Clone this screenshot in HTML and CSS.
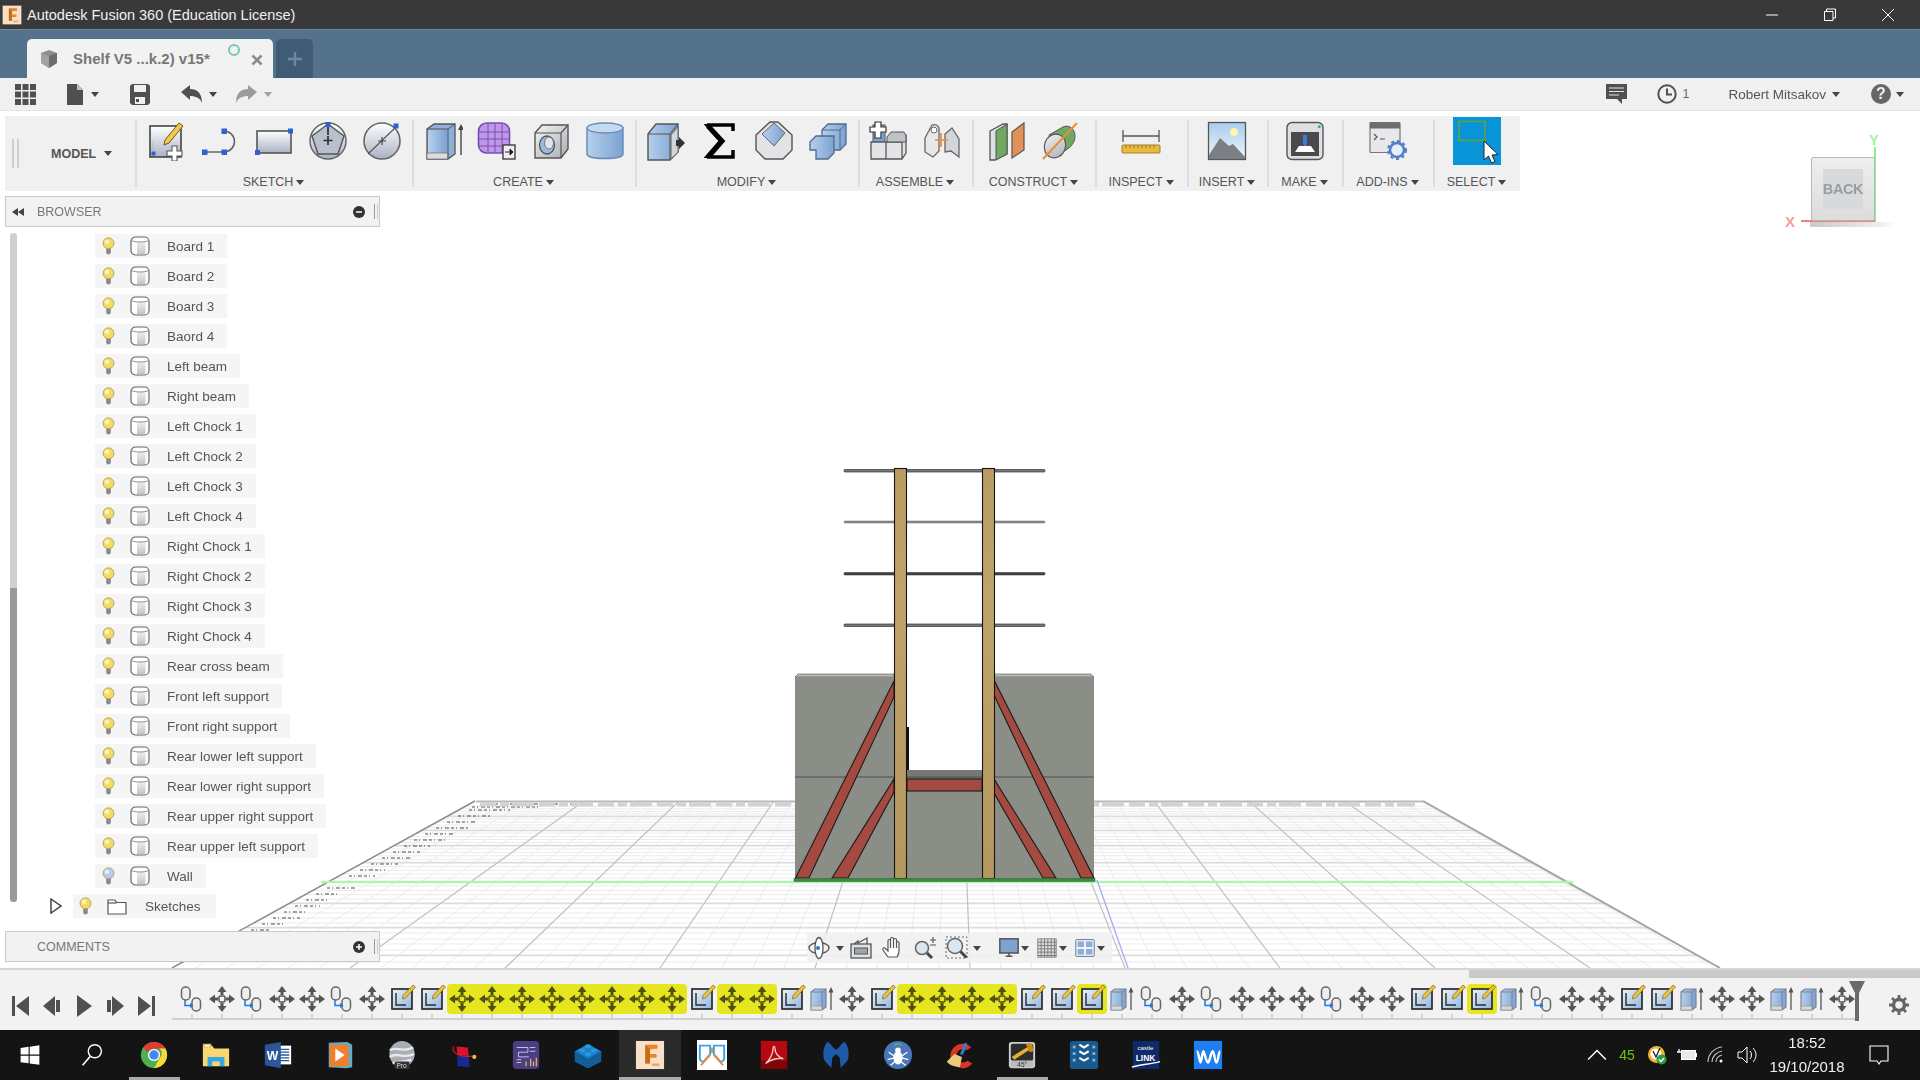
FILE: index.html
```html
<!DOCTYPE html>
<html lang="en">
<head>
<meta charset="utf-8">
<title>Autodesk Fusion 360 (Education License)</title>
<link rel="stylesheet" href="styles.css">
</head>
<body>
<svg class="defs" aria-hidden="true">
<defs>
<linearGradient id="gPaper" x1="0" y1="0" x2="0" y2="1"><stop offset="0" stop-color="#fff"/><stop offset="1" stop-color="#aab2c4"/></linearGradient>
<linearGradient id="gBlue" x1="0" y1="0" x2="1" y2="0"><stop offset="0" stop-color="#b7d0ec"/><stop offset="1" stop-color="#7ba2d2"/></linearGradient>
<linearGradient id="gGrey" x1="0" y1="0" x2="1" y2="1"><stop offset="0" stop-color="#f4f4f4"/><stop offset="1" stop-color="#a9adb5"/></linearGradient>
<linearGradient id="gCyl" x1="0" y1="0" x2="0" y2="1"><stop offset="0" stop-color="#eef0f2"/><stop offset="1" stop-color="#c2c6cc"/></linearGradient>
<linearGradient id="gSketch" x1="0" y1="0" x2="1" y2="1"><stop offset="0" stop-color="#eef3fa"/><stop offset="1" stop-color="#8fb5de"/></linearGradient>
<linearGradient id="gBeam" x1="0" y1="0" x2="0" y2="1"><stop offset="0" stop-color="#b89c62"/><stop offset=".3" stop-color="#bfa36a"/><stop offset="1" stop-color="#b4985f"/></linearGradient>
<linearGradient id="gSky" x1="0" y1="0" x2="0" y2="1"><stop offset="0" stop-color="#a6cdee"/><stop offset="1" stop-color="#f3f6f8"/></linearGradient>

<symbol id="bulb" viewBox="0 0 14 19"><circle cx="7" cy="6.6" r="5.9" fill="currentColor" stroke="#a89a58" stroke-width=".9"/><circle cx="5.4" cy="5" r="2.6" fill="#fff" opacity=".6"/><path d="M4.5 12.5h5v4.2l-1 1.6h-3l-1-1.6z" fill="#8a8a8a"/></symbol>
<symbol id="cyl" viewBox="0 0 20 20"><rect x="1" y="1" width="18" height="18" rx="4.5" fill="#fff" stroke="#666" stroke-width="1.2"/><path d="M7 5.500h8.500v11.500a2 2 0 0 1-1 1H7z" fill="url(#gCyl)"/><path d="M1.400 4.500c3 2 14 2 17.200 0" fill="none" stroke="#888" stroke-width=".9"/></symbol>
<symbol id="folder" viewBox="0 0 20 18"><path d="M1 3h7l1.500 2.500H19V17H1z" fill="#fff" stroke="#555" stroke-width="1.200"/><path d="M1 6h8.500" stroke="#555" stroke-width="1.200"/></symbol>

<symbol id="t-sketch" viewBox="0 0 40 40"><rect x="4" y="5" width="31" height="31" fill="url(#gPaper)" stroke="#444" stroke-width="1.6"/><path d="M33 2l4 3-14 17-5 2 1-5z" fill="#f2c94c" stroke="#6b5a1c" stroke-width="1"/><path d="M7 32h11M7 32V20" stroke="#b3b9c6" stroke-width="1"/><rect x="5.500" y="30.500" width="4" height="4" fill="#2f62cf"/><path d="M26 25h5v5h5v5h-5v5h-5v-5h-5v-5h5z" fill="#fff" stroke="#555" stroke-width="1.100"/></symbol>
<symbol id="t-line" viewBox="0 0 40 40"><path d="M5 31H24M24 10A10.500 10.500 0 0 1 24 31" fill="none" stroke="#666" stroke-width="1.600"/><g fill="#2f62cf"><rect x="2" y="28.500" width="5.500" height="5.500"/><rect x="21.500" y="28.500" width="5.500" height="5.500"/><rect x="21.500" y="7.500" width="5.500" height="5.500"/></g></symbol>
<symbol id="t-rect" viewBox="0 0 40 40"><rect x="3" y="10" width="34" height="22" fill="url(#gPaper)" stroke="#555" stroke-width="1.600"/><rect x="1" y="29" width="5" height="5" fill="#2f62cf"/><rect x="34" y="7.500" width="5" height="5" fill="#2f62cf"/></symbol>
<symbol id="t-poly" viewBox="0 0 40 40"><circle cx="20" cy="20" r="18" fill="url(#gPaper)" stroke="#666" stroke-width="1.500"/><path d="M20 3l16 12-6 18H10L4 15z" fill="#b9bfcc" stroke="#555" stroke-width="1.400"/><path d="M20 5v9M20 15v9M15.500 19.500h9" stroke="#333" stroke-width="1.700"/><rect x="17.500" y="1" width="5" height="5" fill="#2f62cf"/></symbol>
<symbol id="t-circ" viewBox="0 0 40 40"><circle cx="20" cy="20" r="18" fill="url(#gPaper)" stroke="#666" stroke-width="1.600"/><path d="M6 33L34 6" stroke="#555" stroke-width="1.100"/><path d="M20 16v8M16 20h8" stroke="#444" stroke-width="1.200"/><rect x="31.500" y="2.500" width="5" height="5" fill="#2f62cf"/></symbol>
<symbol id="t-ext" viewBox="0 0 40 40"><path d="M4 8l7-5h21v30l-7 5H4z" fill="#8fb0d8" stroke="#555" stroke-width="1.300"/><path d="M5 9h19v23H5z" fill="url(#gBlue)"/><path d="M4 32h21v6H4z" fill="#dcdcdc" stroke="#777" stroke-width=".8"/><path d="M4 8h21l7-5M25 8v30" fill="none" stroke="#555" stroke-width="1"/><path d="M38 34V8" stroke="#444" stroke-width="1.400"/><path d="M38 3l-3 6h6z" fill="#444"/></symbol>
<symbol id="t-form" viewBox="0 0 40 40"><rect x="1.500" y="2" width="31" height="30" rx="8" fill="#bd98e8" stroke="#7a4fb5" stroke-width="1.600"/><path d="M11 2.500v29M18 2v30M25 2.500v29M2 11h30M2 18h30M2 25h30" stroke="#7a4fb5" stroke-width="1"/><rect x="26" y="24" width="12" height="14" fill="#eee" stroke="#333" stroke-width="1.300"/><path d="M28 31h5M33 28l3 3-3 3z" stroke="#222" fill="#222"/></symbol>
<symbol id="t-hole" viewBox="0 0 40 40"><path d="M4 12l7-8h26v24l-7 9H4z" fill="url(#gGrey)" stroke="#555" stroke-width="1.400"/><path d="M4 12h26v25M30 12l7-8" fill="none" stroke="#555" stroke-width="1.200"/><ellipse cx="16" cy="24" rx="7.500" ry="9" fill="#9db9dc" stroke="#555" stroke-width="1.300"/><ellipse cx="18" cy="22" rx="4.500" ry="6" fill="#dfe5ee" stroke="#777"/></symbol>
<symbol id="t-cylinder" viewBox="0 0 40 40"><path d="M2 7v26c0 6 36 6 36 0V7z" fill="url(#gBlue)" stroke="#6a8db8" stroke-width="1.500"/><ellipse cx="20" cy="7" rx="18" ry="5" fill="#c4daee" stroke="#6a8db8" stroke-width="1.300"/></symbol>
<symbol id="t-press" viewBox="0 0 40 40"><path d="M2 13L10 3h22v28l-8 8H2z" fill="url(#gBlue)" stroke="#555" stroke-width="1.400"/><path d="M2 13h22v26M24 13l8-10" fill="none" stroke="#555" stroke-width="1.100"/><path d="M25 14l7-8v25l-7 7z" fill="#d2d5da" stroke="#666"/><path d="M30 19h3v-3l6 6-6 6v-3h-3z" fill="#333"/></symbol>
<symbol id="t-sigma" viewBox="0 0 40 40"><path d="M31 4H6l14 16L6 36h25" fill="none" stroke="#000" stroke-width="2.200"/><path d="M8 5l14 15L9 35" fill="none" stroke="#000" stroke-width="5"/><path d="M7 36h26v-7M7 4h26v6" fill="none" stroke="#000" stroke-width="3.500"/></symbol>
<symbol id="t-chamf" viewBox="0 0 40 40"><path d="M2 14L16 1h8l14 13v15l-9 9H11l-9-9z" fill="#e2e3e6" stroke="#555" stroke-width="1.400"/><path d="M20 2l11 10-11 13L8 13z" fill="url(#gBlue)" stroke="#666" stroke-width="1"/></symbol>
<symbol id="t-comb" viewBox="0 0 40 40"><path d="M14 9l6-6h18v20l-6 6H14z" fill="url(#gBlue)" stroke="#4f6a8e" stroke-width="1.300"/><path d="M2 21l6-6h18v17l-6 6H8v-9H2z" fill="url(#gBlue)" stroke="#4f6a8e" stroke-width="1.300"/><path d="M14 9h18v20M32 9l6-6" fill="none" stroke="#4f6a8e" stroke-width="1"/></symbol>
<symbol id="t-asm" viewBox="0 0 40 40"><rect x="5" y="4" width="12" height="18" fill="#7da3d6" stroke="#555"/><path d="M3 21h31v17H3zM34 21l4-6v17l-4 6" fill="#e3e4e7" stroke="#555" stroke-width="1.300"/><path d="M18 21v17" stroke="#555" stroke-width="1.300"/><path d="M19 16l4-5h13l2 4v6H19z" fill="#bfc2c8" stroke="#555"/><path d="M7 1h6v5h5v5h-5v6H7v-6H2V6h5z" fill="#fff" stroke="#333" stroke-width="1.200"/></symbol>
<symbol id="t-joint" viewBox="0 0 40 40"><path d="M3 17L10 4c3-1 6 0 7 3v23l-6 6-8-5z" fill="#e8e8e8" stroke="#666" stroke-width="1.300"/><path d="M23 13l7-6 7 11v18l-8-6-6 1z" fill="#d3d5da" stroke="#666" stroke-width="1.300"/><path d="M13 19h13" stroke="#e98e3c" stroke-width="1.600"/><circle cx="12" cy="9" r="3" fill="#fff" stroke="#666"/><path d="M19 12v14" stroke="#e98e3c" stroke-width="1.800"/></symbol>
<symbol id="t-plane" viewBox="0 0 40 40"><path d="M3 10l13-7h4v30l-12 6H3z" fill="#dfe0e2" stroke="#555" stroke-width="1.300"/><path d="M9 10l11-7v30L9 39z" fill="#6ea861" stroke="#555"/><path d="M25 37V11l12-9v27z" fill="#e39156" stroke="#555" stroke-width="1.200"/></symbol>
<symbol id="t-axis" viewBox="0 0 40 40"><path d="M8 14l14-8c6-3 12 2 12 9 0 5-2 8-6 12l-12 8z" fill="#6ea861" stroke="#555"/><ellipse cx="14" cy="25" rx="10.500" ry="12" transform="rotate(20 14 25)" fill="url(#gGrey)" stroke="#555" stroke-width="1.200"/><path d="M2 38L36 2" stroke="#e98e3c" stroke-width="2"/></symbol>
<symbol id="t-meas" viewBox="0 0 40 40"><path d="M2 15h36M2 9v12M38 9v12" fill="none" stroke="#555" stroke-width="1.300"/><rect x="1" y="24" width="38" height="8" rx="1" fill="#e7ba42" stroke="#a58122"/><path d="M5 24v3M9 24v3M13 24v3M17 24v3M21 24v3M25 24v3M29 24v3M33 24v3" stroke="#8a6a14" stroke-width=".8"/></symbol>
<symbol id="t-ins" viewBox="0 0 40 40"><rect x="1.500" y="1.500" width="37" height="37" fill="url(#gSky)" stroke="#555" stroke-width="1.300"/><circle cx="27" cy="11" r="4" fill="#fff3b0"/><path d="M2 34l11-17 9 8 4-2 12 13v2H2z" fill="#7c7f86"/></symbol>
<symbol id="t-make" viewBox="0 0 40 40"><rect x="2" y="1.500" width="36" height="37" rx="5" fill="#dedfe2" stroke="#555" stroke-width="1.400"/><rect x="6" y="11" width="28" height="24" fill="#4a4a4d"/><rect x="33" y="4.500" width="2.500" height="2.500" fill="#42b14a"/><path d="M18 14h4v9l-2 3-2-3z" fill="#3e7bd6"/><path d="M10 31l4-6h12l4 6z" fill="#fff"/></symbol>
<symbol id="t-add" viewBox="0 0 40 40"><rect x="2" y="1.500" width="30" height="30" rx="1" fill="#e8e8ea" stroke="#777" stroke-width="1.200"/><rect x="2" y="1.500" width="30" height="6" fill="#6d6d70"/><path d="M6 13l3 3-3 3M12 18h5" fill="none" stroke="#555" stroke-width="1.200"/><circle cx="29" cy="29" r="7" fill="#e8eef8" stroke="#4f7fc4" stroke-width="2.500"/><circle cx="29" cy="29" r="9" fill="none" stroke="#4f7fc4" stroke-width="2" stroke-dasharray="3 3"/></symbol>
<symbol id="t-sel" viewBox="0 0 48 48"><rect width="48" height="48" fill="#0a94d8"/><rect x="6" y="4.500" width="26" height="19" fill="none" stroke="#4ea05c" stroke-width="2"/><path d="M31 24v19l4.500-4 3 7 3.500-1.500-3-6.500 6-.5z" fill="#fff" stroke="#222" stroke-width="1"/></symbol>

<symbol id="k-joint" viewBox="0 0 30 30"><rect x="4.500" y="3" width="8.500" height="13" rx="4" fill="#eee" stroke="#666" stroke-width="1.500"/><rect x="15" y="14" width="8.500" height="13" rx="4" fill="#eee" stroke="#666" stroke-width="1.500"/><path d="M8 16v5.500h5" fill="none" stroke="#1f7ae0" stroke-width="1.500"/><path d="M13 19l3.500 2.500-3.500 2.500z" fill="#1f7ae0"/></symbol>
<symbol id="k-move" viewBox="0 0 30 30"><g fill="currentColor"><path d="M15 2l-4.500 6h3V11h3V8h3zM15 28l-4.500-6h3V19h3v3h3zM2 15l6-4.500v3H11v3H8v3zM28 15l-6-4.500v3H19v3h3v3z"/></g><rect x="12" y="12" width="6" height="6" rx="1.500" fill="none" stroke="currentColor" stroke-width="1.500"/></symbol>
<symbol id="k-sketch" viewBox="0 0 30 30"><rect x="5" y="5" width="20" height="20" fill="url(#gSketch)" stroke="#2a2a2a" stroke-width="1.700"/><path d="M9 9v12h10" fill="none" stroke="#2a2a2a" stroke-width="1.400"/><path d="M26 1l2.500 2-10 11-3 1 .5-3.500z" fill="#eec53a" stroke="#7a6418" stroke-width=".7"/></symbol>
<symbol id="k-ext" viewBox="0 0 30 30"><path d="M4 8l4-3h11v18l-4 3H4z" fill="url(#gBlue)" stroke="#7a8594" stroke-width="1.200"/><path d="M4 8h11v18M15 8l4-3" fill="none" stroke="#7a8594"/><path d="M4 22h11v4H4z" fill="#d8d8d8" stroke="#888" stroke-width=".6"/><path d="M24 26V8" stroke="#555" stroke-width="1.300"/><path d="M24 3l-2.500 5.500h5z" fill="#555"/></symbol>

<symbol id="n-orbit" viewBox="0 0 24 24"><ellipse cx="12" cy="12" rx="10" ry="5.500" fill="none" stroke="#555" stroke-width="1.300"/><ellipse cx="12" cy="12" rx="4" ry="10.500" fill="#fff" stroke="#555" stroke-width="1.300"/><circle cx="11" cy="12" r="2" fill="#1f7ae0"/></symbol>
<symbol id="n-look" viewBox="0 0 24 24"><rect x="2" y="8" width="20" height="14" fill="#dfe1e5" stroke="#555" stroke-width="1.300"/><rect x="5.500" y="12" width="13" height="6" fill="#9fa5ad" stroke="#555"/><path d="M5 8l4-3v3M9 7l9-5v6" fill="none" stroke="#555" stroke-width="1.300"/></symbol>
<symbol id="n-hand" viewBox="0 0 24 24"><path d="M7 21l-5-7c-1-2 1-3 2.500-1.500L7 15V5c0-2 2.500-2 2.500 0v7V3c0-2 3-2 3 0v9V4c0-2 3-2 3 0v8V7c0-2 2.500-2 2.500 0v8c0 3-1 4-2 6z" fill="#fff" stroke="#555" stroke-width="1.200"/></symbol>
<symbol id="n-zoom" viewBox="0 0 24 24"><circle cx="9" cy="12" r="6.500" fill="#d9e7f2" stroke="#666" stroke-width="1.500"/><path d="M14 17l5 5" stroke="#444" stroke-width="3"/><path d="M20 1v6M17 4h6M17 9h6" stroke="#555" stroke-width="1.200"/></symbol>
<symbol id="n-fit" viewBox="0 0 24 24"><rect x="1" y="1" width="21" height="21" fill="none" stroke="#666" stroke-dasharray="2 2"/><circle cx="10" cy="10" r="7.500" fill="#d9e7f2" stroke="#666" stroke-width="1.500"/><path d="M15.500 15.500l6 6" stroke="#444" stroke-width="3"/></symbol>
<symbol id="n-disp" viewBox="0 0 24 24"><rect x="1" y="1" width="22" height="17" fill="#7ea3d0" stroke="#555" stroke-width="1.800"/><path d="M8 22h8M12 18v4" stroke="#555" stroke-width="1.800"/></symbol>
<symbol id="n-grid" viewBox="0 0 24 24"><rect x="1" y="1" width="22" height="22" fill="#dddde0" stroke="#777"/><path d="M5 1v22M9 1v22M13 1v22M17 1v22M21 1v22M1 5h22M1 9h22M1 13h22M1 17h22M1 21h22" stroke="#777" stroke-width="1.100"/></symbol>
<symbol id="n-view" viewBox="0 0 24 24"><rect x="1" y="2" width="22" height="20" rx="1" fill="#fff" stroke="#58708e" stroke-width="1.200"/><g fill="#8eaed6"><rect x="3" y="4" width="8" height="7"/><rect x="13" y="4" width="8" height="7"/><rect x="3" y="13" width="8" height="7"/><rect x="13" y="13" width="8" height="7"/></g></symbol>

<symbol id="a-win" viewBox="0 0 32 32"><path d="M6 8.500l8.500-1.200v8.200H6zM15.700 7.100L26 5.700v9.800H15.700zM6 16.700h8.500v8.200L6 23.700zM15.700 16.700H26v9.800l-10.300-1.400z" fill="#fff"/></symbol>
<symbol id="a-search" viewBox="0 0 32 32"><circle cx="19" cy="12" r="7" fill="none" stroke="#fff" stroke-width="1.500"/><path d="M14 17.500L6 27" stroke="#fff" stroke-width="1.700"/></symbol>
<symbol id="a-chrome" viewBox="0 0 32 32"><circle cx="16" cy="16" r="14" fill="#4caf50"/><path d="M16 2a14 14 0 0 1 12.100 7H16a7 7 0 0 0-6.500 4.400L4.500 8A14 14 0 0 1 16 2z" fill="#e53935"/><path d="M28.100 9A14 14 0 0 1 16 30l6-10.500A7 7 0 0 0 22 9z" fill="#fdd835"/><circle cx="16" cy="16" r="6.500" fill="#fff"/><circle cx="16" cy="16" r="5" fill="#4285f4"/></symbol>
<symbol id="a-exp" viewBox="0 0 32 32"><path d="M2 6h10l2 3h16v19H2z" fill="#f8d775"/><path d="M2 4h9v4H2z" fill="#e8bd50"/><rect x="4" y="5.500" width="5" height="1.500" fill="#fff"/><path d="M7 28v-10h18v10h-5v-5h-8v5z" fill="#35a9e0"/></symbol>
<symbol id="a-word" viewBox="0 0 32 32"><rect x="13" y="6" width="17" height="20" fill="#fff"/><path d="M16 10h12M16 13h12M16 16h12M16 19h12M16 22h12" stroke="#2b579a" stroke-width="1.400"/><path d="M2 5l17-3v28L2 27z" fill="#2b579a"/><text x="4" y="21" class="ti-w">W</text></symbol>
<symbol id="a-media" viewBox="0 0 32 32"><path d="M4 3l20-1 5 3v24l-6 1-19-1z" fill="#6aa8c8"/><rect x="5" y="5" width="20" height="23" rx="2" fill="#f07f2a"/><path d="M11 9l10 7-10 7z" fill="#fff"/></symbol>
<symbol id="a-earth" viewBox="0 0 32 32"><ellipse cx="16" cy="15" rx="13.500" ry="14" fill="#a9adb5"/><path d="M3 11c7-5 12 3 25-3M3 18c8-6 14 3 26-3M6 25c6-3 10 0 20-4" fill="none" stroke="#e9e9e9" stroke-width="2.500"/><rect x="8" y="23" width="16" height="8" rx="2" fill="#333"/><text x="10" y="30" class="ti-p">Pro</text></symbol>
<symbol id="a-kit" viewBox="0 0 32 32"><path d="M8 1l11 2 3 27-13-1z" fill="#111"/><path d="M8 7l12 1 1 9-12-1z" fill="#d9142a"/><path d="M9 16l12 1 1 12-13-1z" fill="#1a2890"/><path d="M5 7c-4 7 8 12 23 10" fill="none" stroke="#e01d2c" stroke-width="1.200"/><circle cx="27" cy="18" r="2.200" fill="#e8c23a"/></symbol>
<symbol id="a-eq" viewBox="0 0 32 32"><rect x="2" y="1" width="28" height="30" rx="4" fill="#4b3f82"/><path d="M6 8h12v5H8v5h11M20 8h6M20 12h6M6 24h5M6 21h5" fill="none" stroke="#c9c7e4" stroke-width="1"/><path d="M21 28v-8M24 28v-5M27 28v-9M16 28v-5" stroke="#f1c264" stroke-width="1.200"/></symbol>
<symbol id="a-lego" viewBox="0 0 32 32"><path d="M16 4l14 8v11l-14 7L2 23V12z" fill="#1a80c7"/><path d="M2 12l14 8 14-8v11l-14 7-14-7z" fill="#125e98"/><g fill="#2b98e0"><ellipse cx="16" cy="7" rx="3.500" ry="2"/><ellipse cx="10" cy="11" rx="3.500" ry="2"/><ellipse cx="22" cy="11" rx="3.500" ry="2"/><ellipse cx="16" cy="15" rx="3.500" ry="2"/></g></symbol>
<symbol id="a-f" viewBox="0 0 32 32"><rect x="1" y="1" width="30" height="30" fill="#f8e0c8"/><path d="M11 5h13v4l-8 1v5h7v4h-7v6h-5z" fill="#e8862a"/><path d="M11 5l5 5v15h-5z" fill="#c96a17"/><rect x="18" y="25" width="8" height="2.500" fill="#e8a46a"/></symbol>
<symbol id="a-zoho" viewBox="0 0 32 32"><rect width="32" height="32" fill="#fff"/><path d="M3 6h11v9l-6 7c-3 3-6-1-5-5zM29 6H18v9l6 7c3 3 6-1 5-5z" fill="none" stroke="#35a4e2" stroke-width="2"/><path d="M4 27l10-11M28 27L18 16M16 8v6" fill="none" stroke="#f08a3c" stroke-width="2"/></symbol>
<symbol id="a-pdf" viewBox="0 0 32 32"><rect x="2" y="1" width="28" height="30" fill="#b5090f"/><rect x="2" y="22" width="28" height="9" fill="#7d0508"/><path d="M7 25c5-4 8-11 8-16 0-3 2-3 2 0 0 5 4 10 9 11-5-1-13 0-19 5z" fill="none" stroke="#f1d0d0" stroke-width="1.400"/></symbol>
<symbol id="a-mal" viewBox="0 0 32 32"><path d="M3 20C1 10 5 2 8 2c3 3 6 8 8 8s5-5 8-8c3 0 7 8 5 18-2 5-7 8-8 10l-1-11-4-4-4 4-1 11c-1-2-6-5-8-10z" fill="#1d5aa8"/></symbol>
<symbol id="a-bug" viewBox="0 0 32 32"><circle cx="16" cy="16" r="15" fill="#4a77b8"/><ellipse cx="16" cy="19" rx="5" ry="7" fill="#fff"/><circle cx="16" cy="11" r="3" fill="#fff"/><path d="M6 13l6 4M26 13l-6 4M5 21l7-2M27 21l-7-2M8 27l5-4M24 27l-5-4" stroke="#fff" stroke-width="1.400"/><path d="M12 6a5 5 0 0 1 8 0" fill="none" stroke="#56b870" stroke-width="1.500"/></symbol>
<symbol id="a-cc" viewBox="0 0 32 32"><path d="M28 8A13 13 0 1 0 29 25l-5-3a7 7 0 1 1-1-11z" fill="#d8342a"/><path d="M21 3l3 1-5 12-3-1z" fill="#2e7fd4"/><path d="M10 15l8 3-2 11c-4 0-12-2-14-6z" fill="#eacb7c"/></symbol>
<symbol id="a-ham" viewBox="0 0 32 32"><rect x="2" y="2" width="28" height="28" rx="3" fill="#cfcfcf"/><rect x="4" y="4" width="24" height="18" rx="2" fill="#2d2d2d"/><path d="M5 18L24 6l2 3L8 21z" fill="#e8b030"/><path d="M20 4l7 0 1 8-4 1z" fill="#c88a18"/><rect x="4" y="22" width="24" height="7" fill="#bcbcbc"/><text x="11" y="29" class="ti-p ti-dk">45°</text></symbol>
<symbol id="a-list" viewBox="0 0 32 32"><rect x="1" y="1" width="30" height="30" rx="3" fill="#1a5a8c"/><g fill="none" stroke="#fff" stroke-width="2.200"><path d="M11 5l5 3 5-3M11 12l5 3 5-3M11 19l5 3 5-3"/></g><g fill="#79b4dc"><rect x="4" y="6" width="3" height="3"/><rect x="4" y="13" width="3" height="3"/><rect x="4" y="20" width="3" height="3"/><rect x="25" y="6" width="3" height="3"/><rect x="25" y="13" width="3" height="3"/><rect x="25" y="20" width="3" height="3"/></g></symbol>
<symbol id="a-cable" viewBox="0 0 32 32"><rect x="2" y="1" width="28" height="30" fill="#0e2a6a"/><text x="7" y="11" class="ti-c">castle</text><text x="5" y="22" class="ti-l">LINK</text><path d="M1 29c8-3 20-3 30-6" fill="none" stroke="#fff" stroke-width="1.500"/></symbol>
<symbol id="a-wave" viewBox="0 0 32 32"><rect x="1" y="1" width="30" height="30" fill="#1e80f0"/><path d="M4 12c2 0 3 12 4 12s2-12 3-12 3 12 5 12 3-12 5-12 2 12 4 12 2-12 4-12" fill="none" stroke="#fff" stroke-width="2.600"/></symbol>
</defs>
</svg>

<div class="app">
  <header class="titlebar">
    <svg class="title-logo"><use href="#a-f"/></svg>
    <span class="title-text">Autodesk Fusion 360 (Education License)</span>
    <div class="winbtns">
      <svg class="winbtn" viewBox="0 0 14 14"><path d="M1 7h12" stroke="#fff"/></svg>
      <svg class="winbtn" viewBox="0 0 14 14"><path d="M3.500 3.500V1h9v9H10M1.500 3.500h8.500v9H1.500z" fill="none" stroke="#fff"/></svg>
      <svg class="winbtn" viewBox="0 0 14 14"><path d="M1 1l12 12M13 1L1 13" stroke="#fff"/></svg>
    </div>
  </header>

  <div class="tabbar">
    <div class="tab">
      <svg class="tab-cube" viewBox="0 0 20 20"><path d="M2 4l8-3 8 3v10l-8 5-8-5z" fill="#8e8e8e"/><path d="M2 4l8 3 8-3v10l-8 5z" fill="#6d6d6d"/><path d="M2 4l8 3v12l-8-5z" fill="#a2a2a2"/></svg>
      <span class="tab-name">Shelf V5 ...k.2) v15*</span>
      <span class="tab-dot"></span>
      <svg class="tab-x" viewBox="0 0 12 12"><path d="M1.500 1.500l9 9M10.500 1.500l-9 9" stroke="#8a8a8a" stroke-width="2.600"/></svg>
    </div>
    <div class="tab-add"><svg class="tab-plus" viewBox="0 0 14 14"><path d="M7 0v14M0 7h14" stroke="#71879b" stroke-width="2.400"/></svg></div>
  </div>

  <div class="quickbar">
    <svg class="q-grid" viewBox="0 0 21 21"><path d="M0 0h6v6H0zM7.500 0h6v6h-6zM15 0h6v6h-6zM0 7.500h6v6H0zM7.500 7.500h6v6h-6zM15 7.500h6v6h-6zM0 15h6v6H0zM7.500 15h6v6h-6zM15 15h6v6h-6z" fill="#505050"/></svg>
    <svg class="q-file" viewBox="0 0 16 21"><path d="M0 0h10l6 6v15H0z" fill="#505050"/><path d="M10 0v6h6z" fill="#bdbdbd"/></svg>
    <i class="caret q-caret1"></i>
    <svg class="q-save" viewBox="0 0 20 21"><path d="M2 0h16l2 2v17l-2 2H2l-2-2V2z" fill="#505050"/><rect x="4" y="1" width="12" height="7" fill="#f0f0f0"/><rect x="5" y="13" width="10" height="7" fill="#f0f0f0"/><rect x="6" y="15" width="3" height="3" fill="#505050"/></svg>
    <svg class="q-undo" viewBox="0 0 21 18"><path d="M0 7l9-7v4c7 0 12 4 12 14-2-5-6-7-12-7v4z" fill="#505050"/></svg>
    <i class="caret q-caret2"></i>
    <svg class="q-redo" viewBox="0 0 21 18"><path d="M21 7l-9-7v4C5 4 0 8 0 18c2-5 6-7 12-7v4z" fill="#9b9b9b"/></svg>
    <i class="caret caret-light q-caret3"></i>
    <div class="q-right">
      <svg class="q-msg" viewBox="0 0 21 20"><path d="M0 0h21v15h-5v5l-5-5H0z" fill="#505050"/><path d="M3 4h15M3 7.500h15M3 11h10" stroke="#e4e4e4" stroke-width="1.200"/></svg>
      <svg class="q-clock" viewBox="0 0 20 20"><circle cx="10" cy="10" r="8.700" fill="none" stroke="#505050" stroke-width="2"/><path d="M10 4.500V10.500H15" fill="none" stroke="#505050" stroke-width="2"/></svg>
      <span class="q-count">1</span>
      <span class="q-user">Robert Mitsakov</span>
      <i class="caret q-caret4"></i>
      <span class="q-help">?</span>
      <i class="caret q-caret5"></i>
    </div>
  </div>

  <main class="viewport">
    <svg class="scene" viewBox="0 111 1920 857" aria-label="3D model of a shelf">
      <defs><clipPath id="floor"><path d="M475 801H1423L1720 968H172z"/></clipPath></defs>
      <g clip-path="url(#floor)">
        <path class="g-min" d="M0 806H1920M0 808.800H1920M0 811.300H1920M0 813.800H1920M0 819H1920M0 822H1920M0 825H1920M0 827.500H1920M0 833H1920M0 836.500H1920M0 839.500H1920M0 842.500H1920M0 849H1920M0 852.400H1920M0 855.800H1920M0 859.300H1920M0 866.500H1920M0 870.300H1920M0 874H1920M0 878H1920M0 886H1920M0 890.400H1920M0 894.700H1920M0 899H1920M0 908H1920M0 913H1920M0 918H1920M0 923H1920M0 933H1920M0 939H1920M0 944H1920M0 950H1920M0 962H1920"/>
        <path class="g-min" d="M489 801L195 968M508 801L226 968M527 801L257 968M546 801L288 968M565 801L319 968M603 801L381 968M622 801L412 968M641 801L443 968M660 801L474 968M698 801L536 968M717 801L567 968M736 801L598 968M755 801L629 968M793 801L691 968M812 801L722 968M831 801L753 968M850 801L784 968M888 801L846 968M907 801L877 968M926 801L908 968M945 801L939 968M983 801L1001 968M1002 801L1032 968M1021 801L1063 968M1040 801L1094 968M1078 801L1156 968M1097 801L1187 968M1116 801L1218 968M1135 801L1249 968M1173 801L1311 968M1192 801L1342 968M1211 801L1373 968M1230 801L1404 968M1268 801L1466 968M1287 801L1497 968M1306 801L1528 968M1325 801L1559 968M1363 801L1621 968M1382 801L1652 968M1401 801L1683 968M1420 801L1714 968"/>
        <path class="g-maj" d="M0 816.300H1920M0 830.300H1920M0 845.600H1920M0 862.700H1920M0 881.800H1920M0 903.300H1920M0 927.600H1920M0 955.400H1920"/>
        <path class="g-maj2" d="M584 801L350 968M679 801L505 968M774 801L660 968M869 801L815 968M964 801L970 968M1059 801L1125 968M1154 801L1280 968M1249 801L1435 968M1344 801L1590 968"/>
        <path class="g-noise" d="M480 804H590M472 807H540M469 810H510M458 816H490M447 822H475M436 828H468M425 834H455M414 840H445M404 846H430M393 852H420M382 858H410M371 864H398M360 870H385M349 876H375M327 888H355M316 894H340M306 900H330M295 906H320M284 912H305M273 918H300M262 924H285M251 930H270M240 936H262"/>
      </g>
      <path class="g-back" d="M476 801.500H1423"/>
      <path class="g-band" d="M480 804.500H1415"/>
      <path class="g-edge" d="M475 801L172 968"/>
      <path class="g-edge-r" d="M1423 801L1720 968"/>
      <path class="axis-x" d="M321 882H1573"/>
      <path class="axis-z" d="M1097 880L1128 968"/>

      <path class="wall-top" d="M795 677l3-3h96v3zM994 674h97l3 3h-100z"/>
      <rect class="wall" x="795" y="677" width="99" height="202"/>
      <rect class="wall" x="994" y="677" width="100" height="202"/>
      <rect class="wall" x="907" y="770" width="75" height="109"/>
      <rect class="wall-dark" x="907" y="770" width="75" height="9"/>
      <path class="wall-seam" d="M795 777H1094"/>
      <rect class="strip" x="907" y="727" width="2" height="43"/>

      <g class="strut">
        <path d="M795.500 878L809 878L894 697L894 681z"/>
        <path d="M832 878L848 878L894 792L894 779z"/>
        <path d="M994 779L994 793L1043 878L1056 878z"/>
        <path d="M994 680L994 695L1081 878L1094 878z"/>
        <rect x="907" y="779" width="75" height="12"/>
      </g>

      <g class="shelf">
        <rect class="shelf-m" x="844" y="469.500" width="201" height="2.500" rx="1"/>
        <rect x="844" y="521" width="201" height="2" rx="1"/>
        <rect class="shelf-d" x="844" y="572.500" width="201" height="2.500" rx="1"/>
        <rect class="shelf-m" x="844" y="624" width="201" height="2.500" rx="1"/>
      </g>
      <rect class="beam" x="894.500" y="468.500" width="12" height="410"/>
      <rect class="beam" x="982.500" y="468.500" width="12" height="410"/>
      <rect class="base" x="794" y="878.500" width="301" height="3"/>
    </svg>

    <div class="toolbar">
      <div class="tb-model">
        <i class="grip"></i>
        <span class="model-label">MODEL</span>
        <i class="caret"></i>
      </div>
      <div class="tb-group g-sk">
        <div class="tb-icons">
          <svg class="tool"><use href="#t-sketch"/></svg>
          <svg class="tool"><use href="#t-line"/></svg>
          <svg class="tool"><use href="#t-rect"/></svg>
          <svg class="tool"><use href="#t-poly"/></svg>
          <svg class="tool"><use href="#t-circ"/></svg>
        </div>
        <div class="tb-label">SKETCH<i class="caret"></i></div>
      </div>
      <div class="tb-group gw-223">
        <div class="tb-icons">
          <svg class="tool"><use href="#t-ext"/></svg>
          <svg class="tool"><use href="#t-form"/></svg>
          <svg class="tool"><use href="#t-hole"/></svg>
          <svg class="tool"><use href="#t-cylinder"/></svg>
        </div>
        <div class="tb-label">CREATE<i class="caret"></i></div>
      </div>
      <div class="tb-group gw-223">
        <div class="tb-icons">
          <svg class="tool"><use href="#t-press"/></svg>
          <svg class="tool"><use href="#t-sigma"/></svg>
          <svg class="tool"><use href="#t-chamf"/></svg>
          <svg class="tool"><use href="#t-comb"/></svg>
        </div>
        <div class="tb-label">MODIFY<i class="caret"></i></div>
      </div>
      <div class="tb-group g-asm">
        <div class="tb-icons">
          <svg class="tool"><use href="#t-asm"/></svg>
          <svg class="tool"><use href="#t-joint"/></svg>
        </div>
        <div class="tb-label">ASSEMBLE<i class="caret"></i></div>
      </div>
      <div class="tb-group g-con">
        <div class="tb-icons">
          <svg class="tool"><use href="#t-plane"/></svg>
          <svg class="tool"><use href="#t-axis"/></svg>
        </div>
        <div class="tb-label">CONSTRUCT<i class="caret"></i></div>
      </div>
      <div class="tb-group g-ins">
        <div class="tb-icons"><svg class="tool"><use href="#t-meas"/></svg></div>
        <div class="tb-label">INSPECT<i class="caret"></i></div>
      </div>
      <div class="tb-group g-img">
        <div class="tb-icons"><svg class="tool"><use href="#t-ins"/></svg></div>
        <div class="tb-label">INSERT<i class="caret"></i></div>
      </div>
      <div class="tb-group g-mk">
        <div class="tb-icons"><svg class="tool"><use href="#t-make"/></svg></div>
        <div class="tb-label">MAKE<i class="caret"></i></div>
      </div>
      <div class="tb-group g-add">
        <div class="tb-icons"><svg class="tool"><use href="#t-add"/></svg></div>
        <div class="tb-label">ADD-INS<i class="caret"></i></div>
      </div>
      <div class="tb-group g-sel">
        <div class="tb-icons"><svg class="tool-sel"><use href="#t-sel"/></svg></div>
        <div class="tb-label">SELECT<i class="caret"></i></div>
      </div>
    </div>

    <aside class="browser">
      <div class="panel-head">
        <svg class="ph-back" viewBox="0 0 12 8"><path d="M6 0v8L0 4zM12 0v8L6 4z" fill="#444"/></svg>
        <span class="ph-title">BROWSER</span>
        <svg class="ph-sign" viewBox="0 0 12 12"><circle cx="6" cy="6" r="6" fill="#333"/><path d="M3 6h6" stroke="#fff" stroke-width="1.500"/></svg>
        <i class="ph-grip"></i>
      </div>
      <div class="tree">
        <i class="scroll"></i>
        <div class="row"><svg class="bulb"><use href="#bulb"/></svg><svg class="cyl"><use href="#cyl"/></svg><span>Board 1</span></div>
        <div class="row"><svg class="bulb"><use href="#bulb"/></svg><svg class="cyl"><use href="#cyl"/></svg><span>Board 2</span></div>
        <div class="row"><svg class="bulb"><use href="#bulb"/></svg><svg class="cyl"><use href="#cyl"/></svg><span>Board 3</span></div>
        <div class="row"><svg class="bulb"><use href="#bulb"/></svg><svg class="cyl"><use href="#cyl"/></svg><span>Baord 4</span></div>
        <div class="row"><svg class="bulb"><use href="#bulb"/></svg><svg class="cyl"><use href="#cyl"/></svg><span>Left beam</span></div>
        <div class="row"><svg class="bulb"><use href="#bulb"/></svg><svg class="cyl"><use href="#cyl"/></svg><span>Right beam</span></div>
        <div class="row"><svg class="bulb"><use href="#bulb"/></svg><svg class="cyl"><use href="#cyl"/></svg><span>Left Chock 1</span></div>
        <div class="row"><svg class="bulb"><use href="#bulb"/></svg><svg class="cyl"><use href="#cyl"/></svg><span>Left Chock 2</span></div>
        <div class="row"><svg class="bulb"><use href="#bulb"/></svg><svg class="cyl"><use href="#cyl"/></svg><span>Left Chock 3</span></div>
        <div class="row"><svg class="bulb"><use href="#bulb"/></svg><svg class="cyl"><use href="#cyl"/></svg><span>Left Chock 4</span></div>
        <div class="row"><svg class="bulb"><use href="#bulb"/></svg><svg class="cyl"><use href="#cyl"/></svg><span>Right Chock 1</span></div>
        <div class="row"><svg class="bulb"><use href="#bulb"/></svg><svg class="cyl"><use href="#cyl"/></svg><span>Right Chock 2</span></div>
        <div class="row"><svg class="bulb"><use href="#bulb"/></svg><svg class="cyl"><use href="#cyl"/></svg><span>Right Chock 3</span></div>
        <div class="row"><svg class="bulb"><use href="#bulb"/></svg><svg class="cyl"><use href="#cyl"/></svg><span>Right Chock 4</span></div>
        <div class="row"><svg class="bulb"><use href="#bulb"/></svg><svg class="cyl"><use href="#cyl"/></svg><span>Rear cross beam</span></div>
        <div class="row"><svg class="bulb"><use href="#bulb"/></svg><svg class="cyl"><use href="#cyl"/></svg><span>Front left support</span></div>
        <div class="row"><svg class="bulb"><use href="#bulb"/></svg><svg class="cyl"><use href="#cyl"/></svg><span>Front right support</span></div>
        <div class="row"><svg class="bulb"><use href="#bulb"/></svg><svg class="cyl"><use href="#cyl"/></svg><span>Rear lower left support</span></div>
        <div class="row"><svg class="bulb"><use href="#bulb"/></svg><svg class="cyl"><use href="#cyl"/></svg><span>Rear lower right support</span></div>
        <div class="row"><svg class="bulb"><use href="#bulb"/></svg><svg class="cyl"><use href="#cyl"/></svg><span>Rear upper right support</span></div>
        <div class="row"><svg class="bulb"><use href="#bulb"/></svg><svg class="cyl"><use href="#cyl"/></svg><span>Rear upper left support</span></div>
        <div class="row"><svg class="bulb bulb-off"><use href="#bulb"/></svg><svg class="cyl"><use href="#cyl"/></svg><span>Wall</span></div>
        <div class="row-folder">
          <svg class="expander" viewBox="0 0 12 16"><path d="M1 1l10 7-10 7z" fill="#fff" stroke="#444" stroke-width="1.500"/></svg>
          <div class="row row-sk"><svg class="bulb"><use href="#bulb"/></svg><svg class="folder"><use href="#folder"/></svg><span>Sketches</span></div>
        </div>
      </div>
      <div class="panel-head panel-comments">
        <span class="ph-title">COMMENTS</span>
        <svg class="ph-sign" viewBox="0 0 12 12"><circle cx="6" cy="6" r="6" fill="#333"/><path d="M3 6h6M6 3v6" stroke="#fff" stroke-width="1.500"/></svg>
        <i class="ph-grip"></i>
      </div>
    </aside>

    <div class="viewcube">
      <span class="vc-y">Y</span>
      <span class="vc-x">X</span>
      <i class="vc-axis-y"></i>
      <i class="vc-axis-x"></i>
      <i class="vc-shadow"></i>
      <div class="vc-face"><div class="vc-inner">BACK</div></div>
    </div>

    <div class="navbar">
      <svg class="nv nv-a"><use href="#n-orbit"/></svg><i class="caret"></i>
      <svg class="nv nv-b"><use href="#n-look"/></svg>
      <svg class="nv nv-c"><use href="#n-hand"/></svg>
      <svg class="nv nv-c"><use href="#n-zoom"/></svg>
      <svg class="nv nv-c"><use href="#n-fit"/></svg><i class="caret nc-fit"></i>
      <svg class="nv nv-d"><use href="#n-disp"/></svg><i class="caret"></i>
      <svg class="nv nv-e"><use href="#n-grid"/></svg><i class="caret"></i>
      <svg class="nv nv-e"><use href="#n-view"/></svg><i class="caret"></i>
    </div>
  </main>

  <section class="timeline">
    <i class="tl-thumb"></i>
    <div class="tl-controls">
      <svg class="pb" viewBox="0 0 18 22"><path d="M0 1h3v20H0zM17 1v20L4 11z" fill="#505050"/></svg>
      <svg class="pb" viewBox="0 0 18 22"><path d="M13 5h4v12h-4zM12 1v20L0 11z" fill="#505050"/></svg>
      <svg class="pb" viewBox="0 0 18 22"><path d="M2 0v22l15-11z" fill="#505050"/></svg>
      <svg class="pb" viewBox="0 0 18 22"><path d="M1 5h4v12H1zM6 1v20l12-10z" fill="#505050"/></svg>
      <svg class="pb" viewBox="0 0 18 22"><path d="M15 1h3v20h-3zM1 1v20l13-10z" fill="#505050"/></svg>
    </div>
    <div class="tl-track">
      <div class="ev"><svg><use href="#k-joint"/></svg></div>
      <div class="ev"><svg><use href="#k-move"/></svg></div>
      <div class="ev"><svg><use href="#k-joint"/></svg></div>
      <div class="ev"><svg><use href="#k-move"/></svg></div>
      <div class="ev"><svg><use href="#k-move"/></svg></div>
      <div class="ev"><svg><use href="#k-joint"/></svg></div>
      <div class="ev"><svg><use href="#k-move"/></svg></div>
      <div class="ev"><svg><use href="#k-sketch"/></svg></div>
      <div class="ev"><svg><use href="#k-sketch"/></svg></div>
      <div class="ev hl hl-s"><svg><use href="#k-move"/></svg></div>
      <div class="ev hl"><svg><use href="#k-move"/></svg></div>
      <div class="ev hl"><svg><use href="#k-move"/></svg></div>
      <div class="ev hl"><svg><use href="#k-move"/></svg></div>
      <div class="ev hl"><svg><use href="#k-move"/></svg></div>
      <div class="ev hl"><svg><use href="#k-move"/></svg></div>
      <div class="ev hl"><svg><use href="#k-move"/></svg></div>
      <div class="ev hl hl-e"><svg><use href="#k-move"/></svg></div>
      <div class="ev"><svg><use href="#k-sketch"/></svg></div>
      <div class="ev hl hl-s"><svg><use href="#k-move"/></svg></div>
      <div class="ev hl hl-e"><svg><use href="#k-move"/></svg></div>
      <div class="ev"><svg><use href="#k-sketch"/></svg></div>
      <div class="ev"><svg><use href="#k-ext"/></svg></div>
      <div class="ev"><svg><use href="#k-move"/></svg></div>
      <div class="ev"><svg><use href="#k-sketch"/></svg></div>
      <div class="ev hl hl-s"><svg><use href="#k-move"/></svg></div>
      <div class="ev hl"><svg><use href="#k-move"/></svg></div>
      <div class="ev hl"><svg><use href="#k-move"/></svg></div>
      <div class="ev hl hl-e"><svg><use href="#k-move"/></svg></div>
      <div class="ev"><svg><use href="#k-sketch"/></svg></div>
      <div class="ev"><svg><use href="#k-sketch"/></svg></div>
      <div class="ev hl hl-s hl-e"><svg><use href="#k-sketch"/></svg></div>
      <div class="ev"><svg><use href="#k-ext"/></svg></div>
      <div class="ev"><svg><use href="#k-joint"/></svg></div>
      <div class="ev"><svg><use href="#k-move"/></svg></div>
      <div class="ev"><svg><use href="#k-joint"/></svg></div>
      <div class="ev"><svg><use href="#k-move"/></svg></div>
      <div class="ev"><svg><use href="#k-move"/></svg></div>
      <div class="ev"><svg><use href="#k-move"/></svg></div>
      <div class="ev"><svg><use href="#k-joint"/></svg></div>
      <div class="ev"><svg><use href="#k-move"/></svg></div>
      <div class="ev"><svg><use href="#k-move"/></svg></div>
      <div class="ev"><svg><use href="#k-sketch"/></svg></div>
      <div class="ev"><svg><use href="#k-sketch"/></svg></div>
      <div class="ev hl hl-s hl-e"><svg><use href="#k-sketch"/></svg></div>
      <div class="ev"><svg><use href="#k-ext"/></svg></div>
      <div class="ev"><svg><use href="#k-joint"/></svg></div>
      <div class="ev"><svg><use href="#k-move"/></svg></div>
      <div class="ev"><svg><use href="#k-move"/></svg></div>
      <div class="ev"><svg><use href="#k-sketch"/></svg></div>
      <div class="ev"><svg><use href="#k-sketch"/></svg></div>
      <div class="ev"><svg><use href="#k-ext"/></svg></div>
      <div class="ev"><svg><use href="#k-move"/></svg></div>
      <div class="ev"><svg><use href="#k-move"/></svg></div>
      <div class="ev"><svg><use href="#k-ext"/></svg></div>
      <div class="ev"><svg><use href="#k-ext"/></svg></div>
      <div class="ev"><svg><use href="#k-move"/></svg></div>
    </div>
    <svg class="playhead" viewBox="0 0 16 40"><path d="M0 0h16l-6 12v28H6V12z" fill="#6a6a6a"/></svg>
    <svg class="tl-gear" viewBox="0 0 20 20"><path d="M10 4.500a5.500 5.500 0 1 0 0 11 5.500 5.500 0 0 0 0-11z" fill="none" stroke="#666" stroke-width="3.400"/><path d="M10 0v4M10 16v4M0 10h4M16 10h4M3 3l3 3M14 14l3 3M17 3l-3 3M6 14l-3 3" stroke="#666" stroke-width="2.800"/></svg>
  </section>

  <footer class="taskbar">
    <div class="tk"><svg><use href="#a-win"/></svg></div>
    <div class="tk"><svg><use href="#a-search"/></svg></div>
    <div class="tk tk-open"><svg><use href="#a-chrome"/></svg></div>
    <div class="tk"><svg><use href="#a-exp"/></svg></div>
    <div class="tk"><svg><use href="#a-word"/></svg></div>
    <div class="tk"><svg><use href="#a-media"/></svg></div>
    <div class="tk"><svg><use href="#a-earth"/></svg></div>
    <div class="tk"><svg><use href="#a-kit"/></svg></div>
    <div class="tk"><svg><use href="#a-eq"/></svg></div>
    <div class="tk"><svg><use href="#a-lego"/></svg></div>
    <div class="tk tk-active"><svg><use href="#a-f"/></svg></div>
    <div class="tk"><svg><use href="#a-zoho"/></svg></div>
    <div class="tk"><svg><use href="#a-pdf"/></svg></div>
    <div class="tk"><svg><use href="#a-mal"/></svg></div>
    <div class="tk"><svg><use href="#a-bug"/></svg></div>
    <div class="tk"><svg><use href="#a-cc"/></svg></div>
    <div class="tk tk-open"><svg><use href="#a-ham"/></svg></div>
    <div class="tk"><svg><use href="#a-list"/></svg></div>
    <div class="tk"><svg><use href="#a-cable"/></svg></div>
    <div class="tk"><svg><use href="#a-wave"/></svg></div>
    <div class="tray">
      <div class="tr"><svg class="tr-ic" viewBox="0 0 18 18"><path d="M1 13l8-8 8 8" fill="none" stroke="#fff" stroke-width="1.300"/></svg></div>
      <div class="tr tr-num">45</div>
      <div class="tr"><svg class="tr-ic" viewBox="0 0 20 20"><circle cx="9.500" cy="9.500" r="8.500" fill="#f2b632"/><circle cx="9" cy="9" r="5.500" fill="#fff"/><path d="M6 6l3 6 4-9" fill="none" stroke="#222" stroke-width="1.300"/><circle cx="14.500" cy="14.500" r="5" fill="#2f9e44"/><path d="M12 14.500l2 2 3-3.500" fill="none" stroke="#fff" stroke-width="1.300"/></svg></div>
      <div class="tr"><svg class="tr-ic" viewBox="0 0 20 20"><rect x="4.500" y="5.500" width="14" height="9" fill="#e8e8e8" stroke="#fff"/><path d="M0 7h4M2 4v3" stroke="#fff" stroke-width="1.300"/><rect x="19" y="8" width="1" height="4" fill="#fff"/></svg></div>
      <div class="tr"><svg class="tr-ic" viewBox="0 0 20 20"><path d="M1 17c0-8 6-14 14-15M5 17c0-5 4-10 10-11M9 17c0-3 2-6 6-7" fill="none" stroke="#bdbdbd" stroke-width="1.200"/><circle cx="14" cy="16" r="1.500" fill="#fff"/></svg></div>
      <div class="tr"><svg class="tr-ic" viewBox="0 0 20 20"><path d="M1 7h4l5-5v16l-5-5H1z" fill="none" stroke="#fff"/><path d="M13 6c2 2 2 6 0 8M16 3c4 4 4 10 0 14" fill="none" stroke="#fff"/></svg></div>
      <div class="clock"><span>18:52</span><span>19/10/2018</span></div>
      <div class="tr tr-note"><svg class="tr-ic" viewBox="0 0 20 20"><path d="M1 1h18v15h-7l-2 3-2-3H1z" fill="none" stroke="#fff" stroke-width="1.100"/></svg></div>
    </div>
  </footer>
</div>
</body>
</html>
```
FILE: styles.css
```css
* { box-sizing: border-box; }
html, body { margin: 0; height: 100%; }
body { overflow: hidden; background: #fff; font-family: "Liberation Sans", Arial, sans-serif; color: #555; }
.defs { position: absolute; width: 0; height: 0; }
.app { display: flex; flex-direction: column; width: 1920px; height: 1080px; filter: blur(.45px); }
i { display: block; }

.caret { width: 0; height: 0; border-left: 4px solid transparent; border-right: 4px solid transparent; border-top: 5px solid #444; flex: none; }
.caret-light { border-top-color: #a3a3a3; }

/* Title bar */
.titlebar { height: 29px; background: #393939; display: flex; align-items: center; flex: none; }
.title-logo { width: 20px; height: 20px; margin-left: 2px; }
.title-text { margin-left: 5px; color: #f0f0f0; font-size: 14.500px; }
.winbtns { margin-left: auto; display: flex; gap: 44px; padding-right: 25px; }
.winbtn { width: 14px; height: 14px; }

/* Tabs */
.tabbar { height: 49px; background: #54728c; border-top: 1px solid #6e8aa3; padding: 9px 0 0 27px; display: flex; gap: 3px; flex: none; }
.tab { width: 246px; background: #f2f2f2; border-radius: 5px 5px 0 0; display: flex; align-items: center; position: relative; }
.tab-cube { width: 20px; height: 20px; margin-left: 12px; }
.tab-name { margin-left: 14px; font-size: 15px; font-weight: bold; color: #777; }
.tab-dot { position: absolute; left: 201px; top: 5px; width: 12px; height: 12px; border: 2px solid #79c5b9; border-radius: 50%; }
.tab-x { position: absolute; left: 224px; top: 15px; width: 12px; height: 12px; }
.tab-add { width: 37px; background: #3f5b75; border-radius: 5px 5px 0 0; display: flex; align-items: center; justify-content: center; }
.tab-plus { width: 14px; height: 14px; }

/* Quick bar */
.quickbar { height: 33px; background: #f0f0f0; border-bottom: 1px solid #e4e4e4; display: flex; align-items: center; flex: none; }
.q-grid { width: 21px; height: 21px; margin-left: 15px; }
.q-file { width: 16px; height: 21px; margin-left: 31px; }
.q-caret1 { margin-left: 8px; }
.q-save { width: 20px; height: 21px; margin-left: 31px; }
.q-undo { width: 21px; height: 18px; margin-left: 31px; }
.q-caret2 { margin-left: 7px; }
.q-redo { width: 21px; height: 18px; margin-left: 19px; }
.q-caret3 { margin-left: 7px; }
.q-right { margin-left: auto; display: flex; align-items: center; }
.q-msg { width: 21px; height: 20px; }
.q-clock { width: 20px; height: 20px; margin-left: 30px; }
.q-count { font-size: 12.500px; margin-left: 5px; color: #666; width: 8px; }
.q-user { font-size: 13.500px; margin-left: 38px; color: #555; }
.quickbar .q-caret4 { margin-left: 6px; }
.q-help { width: 20px; height: 20px; border-radius: 50%; background: #666; color: #f0f0f0; font-weight: bold; font-size: 16px; line-height: 20px; text-align: center; margin-left: 31px; }
.quickbar .q-caret5 { margin-left: 5px; margin-right: 16px; }

/* Viewport */
.viewport { position: relative; height: 857px; flex: none; background: #fff; overflow: hidden; }
.scene { display: block; width: 1920px; height: 857px; }
.g-min { stroke: #ebebeb; stroke-width: 1; fill: none; }
.g-maj { stroke: #dcdcdc; stroke-width: 1.800; fill: none; }
.g-maj2 { stroke: #c0c0c0; stroke-width: 1.200; fill: none; }
.g-noise { stroke: #555; stroke-width: 1.600; stroke-dasharray: 3 2 1 3 4 2; fill: none; opacity: .7; }
.g-back { stroke: #b9b9b9; stroke-width: 2; fill: none; }
.g-band { stroke: #d2d2d2; stroke-width: 4; stroke-dasharray: 16 4 9 3 22 5; fill: none; }
.g-edge { stroke: #8a8a8a; stroke-width: 1.500; }
.g-edge-r { stroke: #a5a5a5; stroke-width: 2; }
.axis-x { stroke: #b0f4b0; stroke-width: 2.500; }
.axis-z { stroke: #a9a9f2; stroke-width: 1.300; }
.wall { fill: #8b8d87; }
.wall-top { fill: #b9b9b5; stroke: #555; stroke-width: .6; }
.wall-dark { fill: #777873; }
.wall-seam { stroke: #4f504c; stroke-width: 1; }
.strip { fill: #111; }
.strut path, .strut rect { fill: #a54a41; stroke: #1a1a1a; stroke-width: 1.100; }
.shelf rect { fill: #8d8d8a; stroke: #666; stroke-width: .5; }
.shelf .shelf-m { fill: #777; stroke: #333; stroke-width: .7; }
.shelf .shelf-d { fill: #444; stroke: #222; }
.beam { fill: url(#gBeam); stroke: #141414; stroke-width: 1.100; }
.base { fill: #3c8a40; stroke: #2e6a30; stroke-width: .5; }

/* Toolbar */
.toolbar { position: absolute; left: 5px; top: 5px; width: 1515px; height: 75px; background: #f0f0f0; display: flex; }
.tb-model { width: 130px; display: flex; align-items: center; gap: 8px; }
.grip { width: 7px; height: 29px; border-left: 2px solid #cfcfcf; border-right: 2px solid #cfcfcf; margin-left: 7px; margin-right: 24px; }
.model-label { font-size: 12.500px; font-weight: bold; color: #555; }
.tb-group { display: flex; flex-direction: column; align-items: center; padding-top: 5px; position: relative; }
.tb-group::before { content: ""; position: absolute; left: 0; top: 4px; bottom: 4px; width: 2px; background: #dedede; }
.gw-223 { width: 223px; }
.g-sk { width: 277px; }
.g-asm { width: 114px; }
.g-con { width: 123px; }
.g-ins { width: 92px; }
.g-img { width: 80px; }
.g-mk { width: 75px; }
.g-add { width: 91px; }
.g-sel { width: 87px; }
.tb-icons { display: flex; height: 40px; align-items: center; }
.tool { width: 40px; height: 40px; margin: 0 7px; flex: none; }
.tool-sel { width: 48px; height: 48px; flex: none; }
.tb-label { margin-top: 14px; font-size: 12.500px; line-height: 14px; color: #555; display: flex; align-items: center; gap: 3px; white-space: nowrap; }

/* Browser */
.browser { position: absolute; left: 5px; top: 85px; width: 375px; height: 766px; display: flex; flex-direction: column; }
.panel-head { height: 31px; background: #f2f2f2; border: 1px solid #c9c9c9; display: flex; align-items: center; flex: none; }
.ph-back { width: 12px; height: 8px; margin-left: 6px; }
.ph-title { font-size: 12.500px; color: #777; margin-left: 13px; }
.panel-comments .ph-title { margin-left: 31px; }
.ph-sign { width: 12px; height: 12px; margin-left: auto; }
.ph-grip { width: 4px; height: 15px; border-left: 1px solid #999; border-right: 1px solid #ccc; margin: 0 1px 0 9px; }
.tree { flex: 1; position: relative; padding: 7px 0 0 90px; display: flex; flex-direction: column; gap: 6px; }
.scroll { position: absolute; left: 5px; top: 6px; width: 7px; height: 669px; border-radius: 3px; background: linear-gradient(#d0d0d0 0, #d0d0d0 53%, #999 53%, #999 100%); }
.row { height: 24px; width: fit-content; background: #f5f5f5; display: flex; align-items: center; padding: 0 13px 0 7px; font-size: 13.500px; color: #555; flex: none; }
.bulb { width: 13px; height: 18px; color: #f3dc5e; flex: none; }
.bulb-off { color: #b7cbee; }
.cyl { width: 20px; height: 20px; margin-left: 15px; flex: none; }
.row span { margin-left: 17px; }
.row-folder { display: flex; align-items: center; margin-left: -45px; }
.expander { width: 12px; height: 16px; }
.row-sk { margin-left: 11px; padding-left: 6px; padding-right: 15px; }
.folder { width: 20px; height: 18px; margin-left: 15px; flex: none; }
.row-sk span { margin-left: 18px; }

/* View cube */
.viewcube { position: absolute; left: 1780px; top: 18px; width: 120px; height: 110px; }
.vc-face { position: absolute; left: 31px; top: 28px; width: 64px; height: 64px; border: 1px solid #b7b7b7; border-radius: 2px; background: linear-gradient(#eeeeee, #dcdcdc); display: flex; align-items: center; justify-content: center; }
.vc-inner { width: 40px; height: 40px; background: #d8d9dc; color: #9a9ca2; font-size: 14.500px; font-weight: bold; display: flex; align-items: center; justify-content: center; letter-spacing: -.4px; }
.vc-axis-y { position: absolute; left: 94px; top: 18px; width: 2px; height: 75px; background: #86f586; }
.vc-axis-x { position: absolute; left: 21px; top: 91px; width: 74px; height: 2px; background: #ee8080; }
.vc-shadow { position: absolute; left: 30px; top: 93px; width: 86px; height: 5px; background: linear-gradient(90deg, #c9c9c9, #eeeeee 80%, #fff); }
.vc-y { position: absolute; left: 89px; top: 2px; color: #9cf59c; font-size: 15px; font-weight: bold; }
.vc-x { position: absolute; left: 5px; top: 84px; color: #f59a9a; font-size: 15px; font-weight: bold; }

/* Nav bar */
.navbar { position: absolute; left: 807px; top: 822px; width: 305px; height: 30px; background: rgba(240,240,240,.85); display: flex; align-items: center; }
.nv { width: 24px; height: 24px; flex: none; }
.navbar .caret { margin-left: 2px; }
.navbar .nv-a + .caret { margin-left: 5px; }
.nv-b { margin-left: 5px; }
.nv-c { margin-left: 8px; }
.navbar .nc-fit { margin-left: 4px; }
.nv-d { width: 20px; height: 20px; margin-left: 18px; }
.nv-e { width: 20px; height: 20px; margin-left: 8px; }

/* Timeline */
.timeline { height: 62px; background: #f2f2f2; border-top: 2px solid #d6d6d6; position: relative; display: flex; flex: none; }
.tl-thumb { position: absolute; left: 1469px; top: 0; right: 0; height: 8px; background: #c9c9c9; }
.tl-controls { width: 177px; padding: 25px 22px 0 12px; display: flex; justify-content: space-between; align-items: flex-start; }
.pb { width: 18px; height: 22px; flex: none; }
.tl-track { display: flex; align-items: flex-start; height: 50px; padding-top: 14px; position: relative; }
.tl-track::after { content: ""; position: absolute; left: -5px; right: 0; bottom: 0; height: 2px; background: #cfcfcf; }
.ev { width: 30px; height: 30px; position: relative; color: #555; flex: none; }
.ev svg { width: 30px; height: 30px; display: block; }
.ev::after { content: ""; position: absolute; left: 14px; top: 30px; width: 2px; height: 6px; background: #d4d4d4; }
.hl { background: #e6e620; color: #505010; }
.hl-s { border-radius: 4px 0 0 4px; }
.hl-e { border-radius: 0 4px 4px 0; }
.hl-s.hl-e { border-radius: 4px; }
.playhead { position: absolute; left: 1849px; top: 11px; width: 16px; height: 40px; }
.tl-gear { position: absolute; left: 1889px; top: 25px; width: 20px; height: 20px; }

/* Taskbar */
.taskbar { height: 50px; background: #141414; display: flex; flex: none; }
.tk { width: 62px; height: 50px; display: flex; align-items: center; justify-content: center; position: relative; flex: none; }
.tk:first-child { margin-left: -1px; }
.tk svg { width: 30px; height: 30px; }
.tk-open::after { content: ""; position: absolute; left: 6px; right: 5px; bottom: 0; height: 3px; background: #aaa; }
.tk-active { background: #2a2a2a; }
.tk-active::after { content: ""; position: absolute; left: 0; right: 0; bottom: 0; height: 3px; background: #aaa; }
.ti-w { font: bold 13px "Liberation Sans", sans-serif; fill: #fff; }
.ti-p { font: 7px "Liberation Sans", sans-serif; fill: #ddd; }
.ti-dk { fill: #333; }
.ti-c { font: 6.500px "Liberation Sans", sans-serif; fill: #fff; }
.ti-l { font: bold 9px "Liberation Sans", sans-serif; fill: #fff; }
.tray { margin-left: auto; display: flex; align-items: center; padding-right: 14px; }
.tr { width: 30px; height: 50px; display: flex; align-items: center; justify-content: center; flex: none; }
.tr-ic { width: 20px; height: 20px; }
.tr-num { color: #6cc417; font-size: 14px; }
.clock { width: 90px; display: flex; flex-direction: column; align-items: center; color: #f0f0f0; font-size: 15px; line-height: 24px; }
.tr-note { width: 54px; }
```
